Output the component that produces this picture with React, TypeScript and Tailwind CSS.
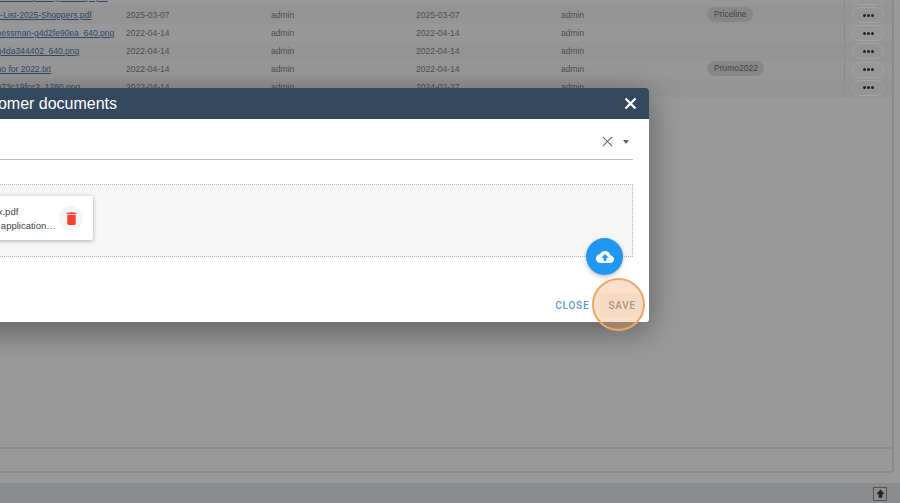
const rows = [
  { name: "Fall-Promo-Flyer-Big-Sale-Q3.pdf", created: "2025-03-07", updated: "2025-03-07", tag: "" },
  { name: "Price-List-2025-Shoppers.pdf", created: "2025-03-07", updated: "2025-03-07", tag: "Priceline" },
  { name: "businessman-g4d2fe90ea_640.png", created: "2022-04-14", updated: "2022-04-14", tag: "" },
  { name: "city-g4da344402_640.png", created: "2022-04-14", updated: "2022-04-14", tag: "" },
  { name: "Promo for 2022.txt", created: "2022-04-14", updated: "2022-04-14", tag: "Promo2022" },
  { name: "city-g73c19fcc2_1280.png", created: "2022-04-14", updated: "2024-02-27", tag: "" },
];

function MoreButton() {
  return (
    <button className="flex h-[16px] w-[32px] items-center justify-center gap-[1px] rounded-full border border-[#a3a3a3]">
      <span className="h-[3px] w-[3px] rounded-full bg-[#222]" />
      <span className="h-[3px] w-[3px] rounded-full bg-[#222]" />
      <span className="h-[3px] w-[3px] rounded-full bg-[#222]" />
    </button>
  );
}

function FileTable() {
  return (
    <div className="-mt-[12.2px] ml-[-19px] w-[912px]">
      {rows.map((row, index) => (
        <div
          key={row.name}
          className={`grid h-[18.2px] grid-cols-[145px_145px_145px_145px_146px_137px_49px] items-center text-[8.5px] text-[#4f4f4f] ${
            index % 2 === 1 ? "bg-[#949494]" : "bg-[#979797]"
          }`}
        >
          <a className="truncate text-[#2c4a68] underline">{row.name}</a>
          <span>{row.created}</span>
          <span>admin</span>
          <span>{row.updated}</span>
          <span>admin</span>
          <div className="flex">
            {row.tag && (
              <span className="inline-flex h-[15px] -translate-y-[1px] items-center rounded-full bg-[#878787] pr-[6px] pl-[7px] text-[#444]">
                {row.tag}
              </span>
            )}
          </div>
          <div className="flex h-full items-center justify-center border-l border-[#8b8b8b] pr-[2px]">
            <MoreButton />
          </div>
        </div>
      ))}
    </div>
  );
}

function DocumentsDialog() {
  return (
    <div className="absolute top-[88px] left-[-120px] flex h-[234px] w-[769px] flex-col overflow-hidden rounded-[3px] bg-white shadow-[0_8px_32px_rgba(0,0,0,0.4)]">
      <div className="flex h-[30.5px] shrink-0 items-center justify-between bg-[#34495e] pt-[1px] pr-[10.8px] pl-[85px] text-white">
        <span className="text-[16px]">Customer documents</span>
        <svg viewBox="0 0 24 24" className="h-[15px] w-[15px]" fill="none" stroke="currentColor" strokeWidth="3.6">
          <path d="M4 4 20 20M20 4 4 20" />
        </svg>
      </div>

      <div className="flex flex-1 flex-col px-[16px]">
        <div className="flex h-[41px] shrink-0 items-center justify-end gap-[10px] border-b border-[#bdbdbd] pt-[6px] pr-[4.5px] text-[#666]">
          <svg viewBox="0 0 24 24" className="h-[11px] w-[11px]" fill="none" stroke="currentColor" strokeWidth="2.2">
            <path d="M2 2 22 22M22 2 2 22" />
          </svg>
          <span className="h-0 w-0 border-x-[3.5px] border-t-[4px] border-x-transparent border-t-[#666]" />
        </div>

        <div className="relative mt-[24.5px] flex h-[73px] shrink-0 items-start border border-dotted border-[#b5b5b5] bg-[#f6f6f6]">
          <div className="mt-[11px] ml-[56px] flex h-[44px] w-[140px] items-center justify-between rounded-[2px] bg-white pr-[10px] pl-[22px] text-[9.5px] text-[#444] shadow-[0_1px_4px_rgba(0,0,0,0.3)]">
            <div className="w-[82px] pt-[1px] leading-[14px]">
              <div className="truncate">Codex.pdf</div>
              <div className="truncate">Type: application/pdf</div>
            </div>
            <div className="flex h-[24px] w-[24px] items-center justify-center rounded-full bg-[#f5f5f5]">
              <svg viewBox="0 0 24 24" className="h-[17px] w-[17px]" fill="#f44336">
                <path d="M6 19c0 1.1.9 2 2 2h8c1.1 0 2-.9 2-2V7H6v12zM19 4h-3.5l-1-1h-5l-1 1H5v2h14V4z" />
              </svg>
            </div>
          </div>
          <button className="absolute right-[9px] bottom-[-19px] flex h-[37px] w-[37px] items-center justify-center rounded-full bg-[#2196f3] shadow-[0_2px_4px_rgba(0,0,0,0.25)]">
            <svg viewBox="0 0 24 24" className="h-[18px] w-[18px]" fill="#fff">
              <path d="M19.35 10.04C18.67 6.59 15.64 4 12 4 9.11 4 6.6 5.64 5.35 8.04 2.34 8.36 0 10.91 0 14c0 3.31 2.69 6 6 6h13c2.76 0 5-2.24 5-5 0-2.64-2.05-4.78-4.65-4.96zM14 13v4h-4v-4H7l5-5 5 5h-3z" />
            </svg>
          </button>
        </div>

        <div className="mt-[36px] -mr-[11px] flex items-center justify-end gap-[11px] font-['Roboto',sans-serif] text-[10px] font-medium tracking-[0.8px]">
          <span className="text-[#5a9fc6]">CLOSE</span>
          <span className="flex h-[25px] items-center bg-black/[0.03] px-[8px] text-[#8f8a85]">SAVE</span>
        </div>
      </div>
    </div>
  );
}

export default function App() {
  return (
    <div className="relative flex h-[503px] w-[900px] flex-col overflow-hidden bg-[#999] font-['Liberation_Sans',Arial,sans-serif]">
      <div className="mr-[6px] h-[447px] shrink-0 overflow-hidden border-r-2 border-[#8b8b8b]">
        <FileTable />
      </div>
      <div className="mr-[6px] h-[26px] shrink-0 rounded-br-[3px] border-y-2 border-r-2 border-[#8b8b8b]" />
      <div className="h-[10px] shrink-0" />
      <div className="flex flex-1 items-center justify-end border-t border-[#8b8b8b] bg-[#8c8d8f] pr-[13px]">
        <button className="flex h-[14px] w-[14px] items-center justify-center border border-[#555]">
          <svg viewBox="0 0 24 24" className="h-[11px] w-[11px]" fill="#222">
            <path d="M12 3 3 13h5v8h8v-8h5z" />
          </svg>
        </button>
      </div>
      <DocumentsDialog />
      {/* highlight ring on the save button */}
      <div className="absolute top-[278px] left-[592px] h-[53px] w-[53px] rounded-full border-2 border-[#f0a566] bg-[#f0a566]/35" />
    </div>
  );
}
